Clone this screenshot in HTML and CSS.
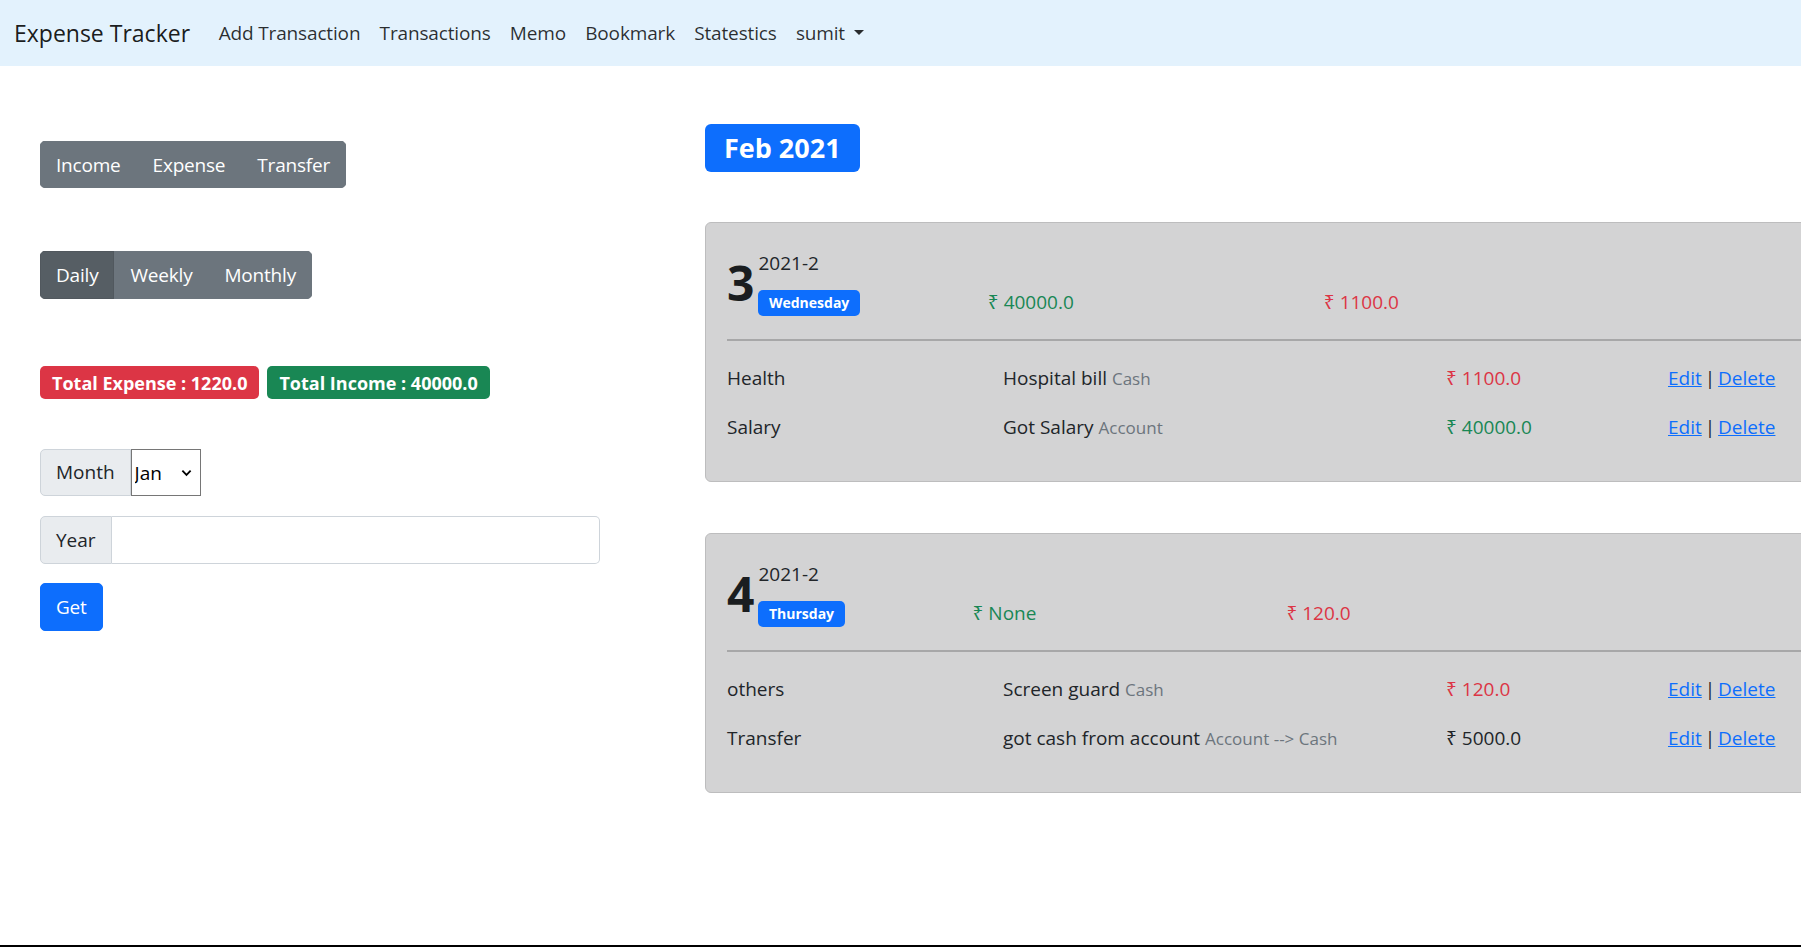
FILE: index.html
```html
<!DOCTYPE html>
<html lang="en">
<head>
<meta charset="utf-8">
<title>Expense Tracker</title>
<link rel="stylesheet" href="styles.css">
</head>
<body>
<nav class="navbar">
  <a class="brand" href="#">Expense Tracker</a>
  <ul class="nav">
    <li><a class="nav-link" href="#">Add Transaction</a></li>
    <li><a class="nav-link" href="#">Transactions</a></li>
    <li><a class="nav-link" href="#">Memo</a></li>
    <li><a class="nav-link" href="#">Bookmark</a></li>
    <li><a class="nav-link" href="#">Statestics</a></li>
    <li><a class="nav-link dropdown-toggle" href="#">sumit</a></li>
  </ul>
</nav>
<main class="page">
  <aside class="side">
    <div class="btn-group group-type">
      <button class="btn btn-secondary">Income</button>
      <button class="btn btn-secondary">Expense</button>
      <button class="btn btn-secondary">Transfer</button>
    </div>
    <div class="btn-group group-period">
      <button class="btn btn-secondary active">Daily</button>
      <button class="btn btn-secondary">Weekly</button>
      <button class="btn btn-secondary">Monthly</button>
    </div>
    <div class="totals">
      <span class="badge badge-red">Total Expense : 1220.0</span>
      <span class="badge badge-green">Total Income : 40000.0</span>
    </div>
    <form class="filter">
      <div class="input-group month-group">
        <span class="ig-text">Month</span>
        <select class="month-select"><option>Jan</option></select>
      </div>
      <div class="input-group year-group">
        <span class="ig-text">Year</span>
        <input class="ig-input" type="text">
      </div>
      <button class="btn btn-primary" type="button">Get</button>
    </form>
  </aside>
  <section class="feed">
    <div class="month-title">Feb 2021</div>

    <div class="day-card">
      <div class="day-head">
        <span class="day-num">3</span>
        <div class="day-meta">
          <span class="ym">2021-2</span>
          <span class="badge-day">Wednesday</span>
        </div>
        <span class="amt amt-in">₹ 40000.0</span>
        <span class="amt amt-out">₹ 1100.0</span>
      </div>
      <hr class="day-rule">
      <div class="tx-row">
        <span>Health</span>
        <span>Hospital bill <small class="acct">Cash</small></span>
        <span class="red">₹ 1100.0</span>
        <span class="tx-actions"><a href="#">Edit</a> | <a href="#">Delete</a></span>
      </div>
      <div class="tx-row">
        <span>Salary</span>
        <span>Got Salary <small class="acct">Account</small></span>
        <span class="green">₹ 40000.0</span>
        <span class="tx-actions"><a href="#">Edit</a> | <a href="#">Delete</a></span>
      </div>
    </div>

    <div class="day-card">
      <div class="day-head">
        <span class="day-num">4</span>
        <div class="day-meta">
          <span class="ym">2021-2</span>
          <span class="badge-day">Thursday</span>
        </div>
        <span class="amt amt-in">₹ None</span>
        <span class="amt amt-out">₹ 120.0</span>
      </div>
      <hr class="day-rule">
      <div class="tx-row">
        <span>others</span>
        <span>Screen guard <small class="acct">Cash</small></span>
        <span class="red">₹ 120.0</span>
        <span class="tx-actions"><a href="#">Edit</a> | <a href="#">Delete</a></span>
      </div>
      <div class="tx-row">
        <span>Transfer</span>
        <span>got cash from account <small class="acct">Account --&gt; Cash</small></span>
        <span>₹ 5000.0</span>
        <span class="tx-actions"><a href="#">Edit</a> | <a href="#">Delete</a></span>
      </div>
    </div>
  </section>
</main>
</body>
</html>
```

FILE: styles.css
```css
html {
  overflow: hidden;
}

body {
  margin: 0;
  font-family: "Open Sans", "Noto Sans", "DejaVu Sans", sans-serif;
  font-size: 19px;
  line-height: 1.5;
  color: #212529;
  background: #fff;
  min-height: 100vh;
  box-sizing: border-box;
  border-bottom: 2px solid #000;
  overflow: hidden;
}

/* Navbar */
.navbar {
  display: flex;
  align-items: center;
  height: 66px;
  padding: 0 14px;
  background: #e3f2fd;
}

.brand {
  font-size: 23px;
  color: rgba(0, 0, 0, 0.9);
  text-decoration: none;
  margin-right: 19px;
}

.nav {
  display: flex;
  list-style: none;
  margin: 0;
  padding: 0;
}

.nav-link {
  display: block;
  padding: 8px 9.6px;
  color: rgba(0, 0, 0, 0.82);
  text-decoration: none;
  letter-spacing: -0.15px;
}

.dropdown-toggle::after {
  content: "";
  display: inline-block;
  margin-left: 9px;
  vertical-align: 0.255em;
  border-top: 0.3em solid;
  border-right: 0.3em solid transparent;
  border-left: 0.3em solid transparent;
}

/* Layout */
.page {
  display: flex;
  align-items: flex-start;
  padding: 58px 0 0 40px;
}

.side {
  flex: none;
  width: 665px;
  padding-top: 17px;
}

.feed {
  flex: none;
  width: 1160px;
}

/* Buttons */
.btn-group {
  display: flex;
  width: fit-content;
  border-radius: 5px;
  overflow: hidden;
}

.btn {
  font-family: inherit;
  font-size: 19px;
  height: 47px;
  padding: 0 15px;
  border: 1px solid transparent;
  color: #fff;
  cursor: pointer;
  letter-spacing: -0.2px;
}

.btn-secondary {
  background: #6c757d;
  border-color: #6c757d;
}

.btn-secondary.active {
  background: #565e64;
  border-color: #51585e;
}

.group-type {
  margin-bottom: 63px;
}

.group-period {
  height: 48px;
  margin-bottom: 67px;
}

.group-period .btn {
  height: 48px;
}

/* Totals */
.totals {
  display: flex;
  gap: 8px;
  margin-bottom: 50px;
}

.badge {
  font-size: 18px;
  font-weight: 700;
  line-height: 18px;
  padding: 7.5px 12px;
  border-radius: 5px;
  color: #fff;
}

.badge-red {
  background: #dc3545;
}

.badge-green {
  background: #198754;
}

/* Filter form */
.input-group {
  display: flex;
  height: 47px;
}

.ig-text {
  display: flex;
  align-items: center;
  padding: 0 15px;
  background: #e9ecef;
  border: 1px solid #ced4da;
  border-radius: 5px 0 0 5px;
  color: #212529;
}

.month-group {
  margin-bottom: 20px;
}

.month-select {
  appearance: none;
  -webkit-appearance: none;
  width: 70px;
  height: 47px;
  margin: 0;
  padding: 0 20px 0 3px;
  font-family: inherit;
  font-size: 19px;
  color: #000;
  border: 1px solid #767676;
  border-radius: 0;
  background: #fff url("data:image/svg+xml,%3Csvg xmlns='http://www.w3.org/2000/svg' viewBox='0 0 12 8'%3E%3Cpath d='M1.5 1.5l4.5 4.5 4.5-4.5' fill='none' stroke='%23000' stroke-width='2'/%3E%3C/svg%3E") no-repeat right 8px center / 11px 8px;
}

.year-group {
  width: 560px;
  height: 48px;
  margin-bottom: 19px;
}

.ig-input {
  flex: 1;
  min-width: 0;
  margin: 0;
  border: 1px solid #ced4da;
  border-left: 0;
  border-radius: 0 5px 5px 0;
  font-family: inherit;
  font-size: 19px;
  padding: 0 15px;
}

.btn-primary {
  height: 48px;
  background: #0d6efd;
  border-color: #0d6efd;
  border-radius: 5px;
}

/* Feed */
.month-title {
  width: fit-content;
  background: #0d6efd;
  color: #fff;
  font-size: 27px;
  font-weight: 700;
  line-height: 28px;
  padding: 10px 19px;
  border-radius: 6px;
  margin-bottom: 50px;
}

.day-card {
  background: #d3d3d4;
  border: 1px solid #bdbdbe;
  border-radius: 6px;
  padding: 28px 0 29px 21px;
  margin-bottom: 51px;
}

.day-head {
  display: flex;
  align-items: flex-end;
  height: 65px;
}

.day-num {
  font-size: 48px;
  font-weight: 700;
  line-height: 48px;
  margin-bottom: 9px;
  color: #1a1d20;
}

.day-meta {
  display: flex;
  flex-direction: column;
  align-items: flex-start;
  margin-left: 4px;
}

.ym {
  line-height: 24px;
}

.badge-day {
  margin-top: 15px;
  font-size: 14px;
  font-weight: 700;
  line-height: 14px;
  padding: 6px 10.5px;
  border-radius: 5px;
  background: #0d6efd;
  color: #fff;
}

.amt {
  line-height: 28px;
}

.amt-in {
  margin-left: 128px;
  color: #198754;
}

.amt-out {
  margin-left: 250px;
  color: #dc3545;
}

.day-rule {
  border: 0;
  height: 2px;
  background: #a7a7a8;
  margin: 23px 0 13px;
}

.tx-row {
  display: grid;
  grid-template-columns: 276px 443px 222px auto;
  align-items: center;
  height: 49px;
}

.acct {
  font-size: 17px;
  color: #6c757d;
}

.red {
  color: #dc3545;
}

.green {
  color: #198754;
}

.tx-actions {
  word-spacing: -2px;
}

.tx-actions a {
  color: #0d6efd;
  text-decoration: underline;
}
```
